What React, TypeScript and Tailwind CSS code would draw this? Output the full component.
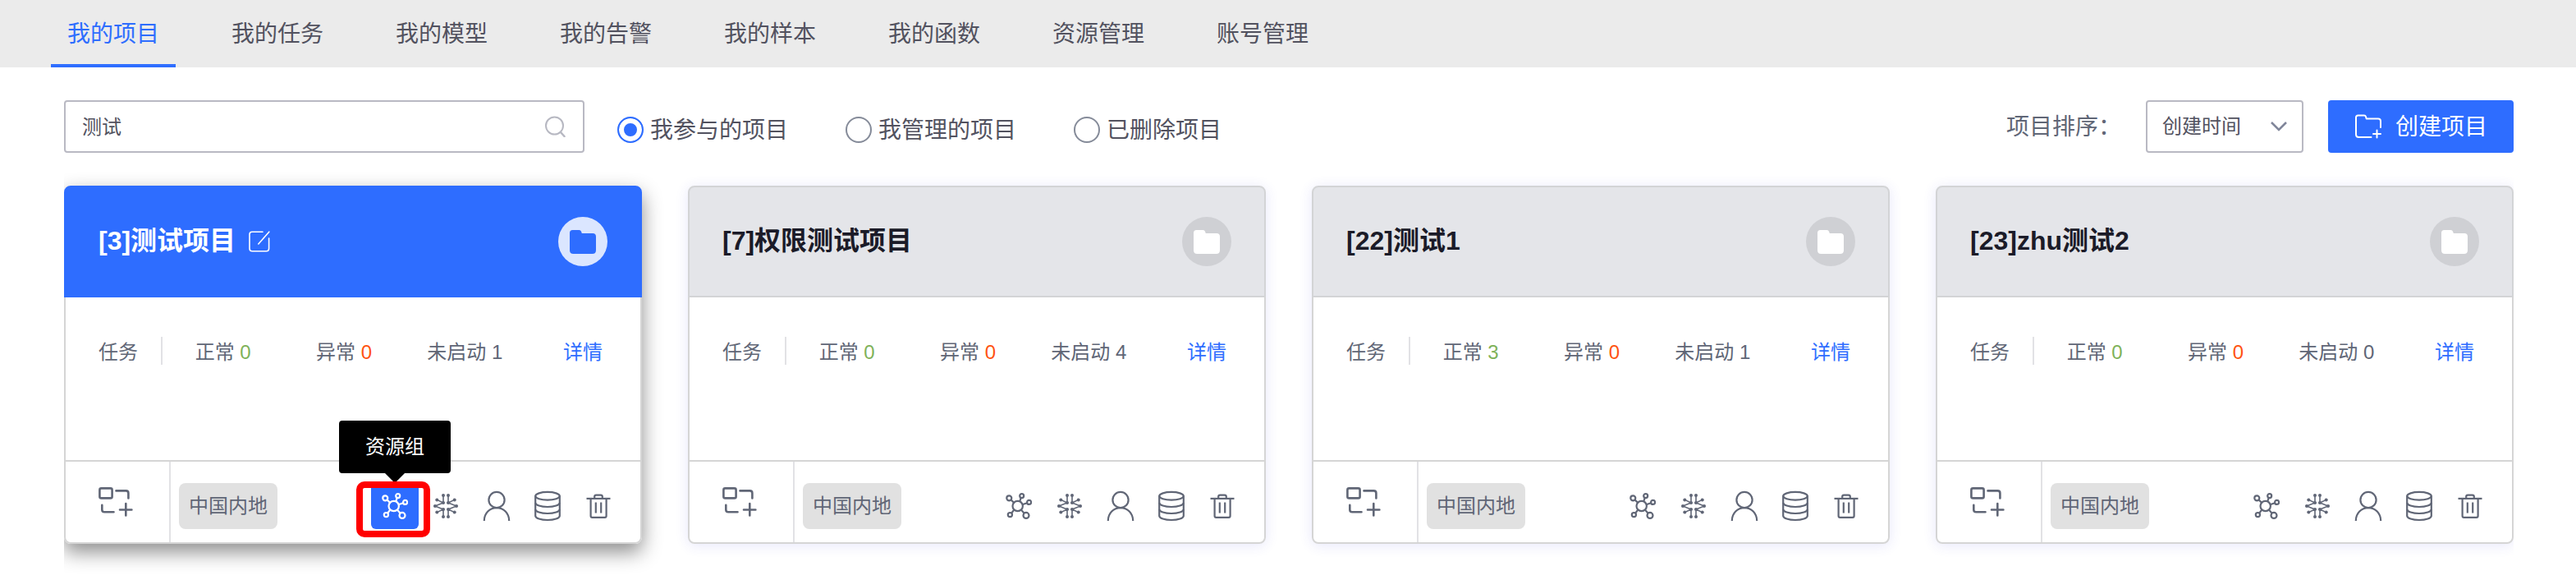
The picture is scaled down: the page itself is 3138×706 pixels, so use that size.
import { useState } from "react";
import type { ReactNode } from "react";

type Project = {
  id: number;
  name: string;
  normal: number;
  abnormal: number;
  idle: number;
  region: string;
  active?: boolean;
};

const tabs = ["我的项目", "我的任务", "我的模型", "我的告警", "我的样本", "我的函数", "资源管理", "账号管理"];

const filters = ["我参与的项目", "我管理的项目", "已删除项目"];

const projects: Project[] = [
  { id: 3, name: "测试项目", normal: 0, abnormal: 0, idle: 1, region: "中国内地", active: true },
  { id: 7, name: "权限测试项目", normal: 0, abnormal: 0, idle: 4, region: "中国内地" },
  { id: 22, name: "测试1", normal: 3, abnormal: 0, idle: 1, region: "中国内地" },
  { id: 23, name: "zhu测试2", normal: 0, abnormal: 0, idle: 0, region: "中国内地" },
];

function SearchIcon() {
  return (
    <svg width="26" height="26" viewBox="0 0 26 26" fill="none" stroke="#b7b8c2" strokeWidth="2" strokeLinecap="round">
      <circle cx="11.5" cy="12" r="10.5" />
      <path d="M19 20 L23.5 25" strokeWidth="2.5" />
    </svg>
  );
}

function FolderPlusIcon() {
  return (
    <svg width="34" height="30" viewBox="0 0 34 30" fill="none" stroke="currentColor" strokeWidth="2" strokeLinecap="round" strokeLinejoin="round">
      <path d="M20.5 28 H5.5 Q2 28 2 24.5 V4 Q2 1.5 4.5 1.5 H12 Q13.5 1.5 14 3 L14.7 5.5 H29 Q32 5.5 32 8.5 V16" />
      <path d="M27.5 19.5 V28.5 M23 24 H32" />
    </svg>
  );
}

function FolderIcon() {
  return (
    <svg width="32" height="29" viewBox="0 0 32 29" fill="currentColor">
      <path d="M3.5 0 H11.5 Q13.3 0 14 1.8 L14.8 4 H28 Q32 4 32 8 V24.5 Q32 29 27.5 29 H4.5 Q0 29 0 24.5 V3.5 Q0 0 3.5 0 Z" />
    </svg>
  );
}

function EditIcon() {
  return (
    <svg width="26" height="26" viewBox="0 0 26 26" fill="none" stroke="currentColor" strokeWidth="1.6" strokeLinecap="round">
      <path d="M17 1.2 H4 Q1 1.2 1 4.2 V21.5 Q1 24.8 4.2 24.8 H21.4 Q24.6 24.8 24.6 21.5 V9" />
      <path d="M24.8 1.2 L11.8 16" />
    </svg>
  );
}

function AddModuleIcon() {
  return (
    <svg width="42" height="36" viewBox="0 0 42 36" fill="none" stroke="currentColor" strokeWidth="2.6" strokeLinecap="round" strokeLinejoin="round">
      <rect x="1.4" y="1.4" width="15.2" height="12" rx="2" />
      <path d="M21.5 4.4 H33.5 Q36.4 4.4 36.4 7.2 V13.4" />
      <path d="M4.3 21.8 V27.5 Q4.3 30.3 7.2 30.3 H18.5" />
      <path d="M33.3 20 V34.4 M26 27.5 H40.4" />
    </svg>
  );
}

function NetworkIcon() {
  return (
    <svg width="32" height="32" viewBox="0 0 32 32" fill="none" stroke="currentColor" strokeWidth="2.2">
      <circle cx="14.7" cy="16" r="6.2" />
      <circle cx="4.3" cy="6.3" r="3" />
      <circle cx="19.7" cy="3.6" r="2.5" />
      <circle cx="28.6" cy="11.4" r="2.5" />
      <circle cx="5.4" cy="26.6" r="2.6" />
      <circle cx="25" cy="27.4" r="3.5" />
      <path d="M6.5 8.4 L10 11.7 M18.7 6 L17.2 10.4 M26.1 12.2 L20.4 14.2 M10.3 20.5 L7.2 24.6 M18.8 20.4 L22.6 24.8" />
    </svg>
  );
}

const snowNodes: [number, number][] = [
  [13, 3], [19, 3], [13, 29], [19, 29],
  [13, 12], [19, 12], [13, 20], [19, 20],
  [3, 16], [29, 16],
  [5.3, 8.4], [26.7, 8.4], [5.3, 23.6], [26.7, 23.6],
];

function CircuitIcon() {
  return (
    <svg width="32" height="32" viewBox="0 0 32 32" fill="currentColor" stroke="none">
      <path
        d="M13 3 V12 M19 3 V12 M13 20 V29 M19 20 V29 M5.3 8.4 L13 12 L3 16 L13 20 L5.3 23.6 M26.7 8.4 L19 12 L29 16 L19 20 L26.7 23.6"
        fill="none"
        stroke="currentColor"
        strokeWidth="1.6"
      />
      {snowNodes.map(([x, y]) => (
        <circle key={`${x}-${y}`} cx={x} cy={y} r="2" />
      ))}
    </svg>
  );
}

function UserIcon() {
  return (
    <svg width="36" height="40" viewBox="0 0 36 40" fill="none" stroke="currentColor" strokeWidth="2.2">
      <circle cx="18" cy="12.5" r="9.6" />
      <path d="M2.8 38 C2.8 28.6 9.6 22.1 18 22.1 S33.2 28.6 33.2 38" />
    </svg>
  );
}

function DatabaseIcon() {
  return (
    <svg width="36" height="40" viewBox="0 0 36 40" fill="none" stroke="currentColor" strokeWidth="2.2">
      <ellipse cx="18" cy="7.8" rx="14.8" ry="4.9" />
      <path d="M3.2 7.8 V32 C3.2 34.8 9.8 37 18 37 S32.8 34.8 32.8 32 V7.8" />
      <path d="M3.2 16 C3.2 18.8 9.8 21 18 21 S32.8 18.8 32.8 16" />
      <path d="M3.2 24 C3.2 26.8 9.8 29 18 29 S32.8 26.8 32.8 24" />
    </svg>
  );
}

function TrashIcon() {
  return (
    <svg width="32" height="32" viewBox="0 0 32 32" fill="none" stroke="currentColor" strokeWidth="2.2">
      <path d="M1.5 6.9 H30.5" />
      <path d="M11.2 6.9 V4.6 Q11.2 2.6 13.2 2.6 H18.8 Q20.8 2.6 20.8 4.6 V6.9" />
      <path d="M6.6 6.9 V28 Q6.6 29.8 8.4 29.8 H23.8 Q25.6 29.8 25.6 28 V6.9" />
      <path d="M12.8 11.5 V24.5 M19.2 11.5 V24.5" />
    </svg>
  );
}

function IconButton({ label, children }: { label: string; children: ReactNode }) {
  return (
    <button type="button" aria-label={label} className="flex h-14 w-[58px] items-center justify-center rounded-md text-[#606676]">
      {children}
    </button>
  );
}

function ResourceGroupButton({ active }: { active?: boolean }) {
  if (!active) {
    return (
      <IconButton label="资源组">
        <NetworkIcon />
      </IconButton>
    );
  }
  return (
    <div className="relative">
      <button type="button" aria-label="资源组" className="flex h-14 w-[58px] items-center justify-center rounded-md bg-[#2e6dff] text-white">
        <NetworkIcon />
      </button>
      <div role="tooltip" className="absolute bottom-full left-1/2 mb-3 -translate-x-1/2 rounded bg-black px-8 py-4 text-2xl leading-8 whitespace-nowrap text-white">
        资源组
        <span className="absolute top-full left-1/2 -translate-x-1/2 border-x-12 border-t-12 border-x-transparent border-t-black" />
      </div>
      <span className="pointer-events-none absolute -top-0.5 -right-3.5 -bottom-2.5 -left-4.5 rounded-[10px] border-8 border-[#ff0000]" />
    </div>
  );
}

function ProjectCard({ project }: { project: Project }) {
  const { active } = project;
  return (
    <article
      className={
        active
          ? "rounded-lg bg-white shadow-[0_10px_24px_rgba(0,0,0,0.45)]"
          : "rounded-lg bg-white shadow-[0_2px_16px_rgba(60,60,220,0.12)]"
      }
    >
      <header
        className={
          active
            ? "flex h-34 items-center rounded-t-lg border-2 border-[#2e6dff] bg-[#2e6dff] px-10 text-white"
            : "flex h-34 items-center rounded-t-lg border-2 border-[#d3d4d6] bg-[#e4e5e9] px-10 text-[#1b1b28]"
        }
      >
        <h2 className="pb-0.5 text-[32px] leading-10 font-bold whitespace-nowrap">
          [{project.id}]{project.name}
        </h2>
        {active && (
          <button type="button" aria-label="编辑" className="ml-4">
            <EditIcon />
          </button>
        )}
        <span
          className={
            active
              ? "ml-auto flex size-15 items-center justify-center rounded-full bg-[#dbe6ff] text-[#2e6dff]"
              : "ml-auto flex size-15 items-center justify-center rounded-full bg-[#cfd0d4] text-white"
          }
        >
          <FolderIcon />
        </span>
      </header>

      <div className="h-[198px] border-x-2 border-[#d5d5d5] pt-12">
        <div className="grid grid-cols-[118px_1fr_1fr_1fr_140px] text-center text-2xl leading-[30px] whitespace-nowrap text-[#606676]">
          <span className="border-r-2 border-[#e2e2e5] pt-1 pl-10 text-left">任务</span>
          <span className="pt-1">
            正常 <span className="text-[#7fb25a]">{project.normal}</span>
          </span>
          <span className="pt-1">
            异常 <span className="text-[#ff5311]">{project.abnormal}</span>
          </span>
          <span className="pt-1">未启动 {project.idle}</span>
          <a href="#detail" className="pt-1 text-[#2e6dff]">
            详情
          </a>
        </div>
      </div>

      <footer className="flex h-[102px] rounded-b-lg border-2 border-[#d5d5d5]">
        <button type="button" aria-label="添加任务" className="flex w-32 items-center border-r-2 border-[#e2e2e5] pl-10 text-[#606676]">
          <AddModuleIcon />
        </button>
        <div className="flex flex-1 items-start pt-[26px] pr-[22px] pl-2.5">
          <span className="rounded-lg bg-[#e1e1e1] px-3 text-2xl leading-14 whitespace-nowrap text-[#606676]">{project.region}</span>
          <div className="ml-auto flex gap-1">
            <ResourceGroupButton active={active} />
            <IconButton label="集群">
              <CircuitIcon />
            </IconButton>
            <IconButton label="成员">
              <UserIcon />
            </IconButton>
            <IconButton label="数据">
              <DatabaseIcon />
            </IconButton>
            <IconButton label="删除">
              <TrashIcon />
            </IconButton>
          </div>
        </div>
      </footer>
    </article>
  );
}

export default function App() {
  const [filter, setFilter] = useState(filters[0]);
  const [keyword, setKeyword] = useState("测试");

  return (
    <div className="bg-white font-['Liberation_Sans','Noto_Sans_CJK_SC',sans-serif] text-[#52525f]">
      <nav className="flex h-[82px] gap-12 bg-[#ebebeb] pl-[62px] text-[28px] leading-10">
        {tabs.map((tab, i) => (
          <a
            key={tab}
            href="#tab"
            aria-current={i === 0 ? "page" : undefined}
            className={
              i === 0
                ? "border-b-4 border-[#2e6dff] px-5 pt-[22px] whitespace-nowrap text-[#2e6dff]"
                : "border-b-4 border-transparent px-5 pt-[22px] whitespace-nowrap"
            }
          >
            {tab}
          </a>
        ))}
      </nav>

      <main className="pt-10 pr-[76px] pl-[78px]">
        <div className="flex items-center">
          <label className="flex h-16 w-[634px] items-center rounded border-2 border-[#b9b9c3] px-5">
            <input
              type="text"
              aria-label="搜索项目"
              value={keyword}
              onChange={(e) => setKeyword(e.target.value)}
              className="min-w-0 flex-1 bg-transparent pt-0.5 text-2xl outline-none"
            />
            <SearchIcon />
          </label>

          <div role="radiogroup" aria-label="项目范围" className="ml-10 flex gap-[70px] pt-2 text-[28px] leading-10">
            {filters.map((name) => (
              <label key={name} className="flex items-center gap-2 whitespace-nowrap">
                <input
                  type="radio"
                  name="scope"
                  checked={filter === name}
                  onChange={() => setFilter(name)}
                  className="size-8 appearance-none rounded-full border-2 border-[#858b99] bg-white checked:border-[#2e6dff] checked:bg-[#2e6dff] checked:shadow-[inset_0_0_0_6px_white]"
                />
                <span className="pt-0.5">{name}</span>
              </label>
            ))}
          </div>

          <label htmlFor="sort" className="ml-auto pt-0.5 text-[28px] leading-10 whitespace-nowrap text-[#606676]">
            项目排序：
          </label>
          <div className="relative ml-[30px]">
            <select id="sort" className="h-16 w-48 appearance-none rounded border-2 border-[#b9b9c3] bg-white pl-[18px] text-2xl">
              <option>创建时间</option>
            </select>
            <svg className="pointer-events-none absolute top-1/2 right-5 -translate-y-1/2" width="20" height="12" viewBox="0 0 20 12" fill="none" stroke="#80869a" strokeWidth="2.6">
              <path d="M1 1 L10 10 L19 1" />
            </svg>
          </div>
          <button type="button" className="ml-[30px] flex h-16 items-center gap-4 rounded bg-[#2e6dff] px-8 text-[28px] leading-10 whitespace-nowrap text-white">
            <FolderPlusIcon />
            <span className="pt-0.5">创建项目</span>
          </button>
        </div>

        <div className="grid grid-cols-4 gap-14 overflow-hidden pt-10 pb-11">
          {projects.map((project) => (
            <ProjectCard key={project.id} project={project} />
          ))}
        </div>
      </main>
    </div>
  );
}
